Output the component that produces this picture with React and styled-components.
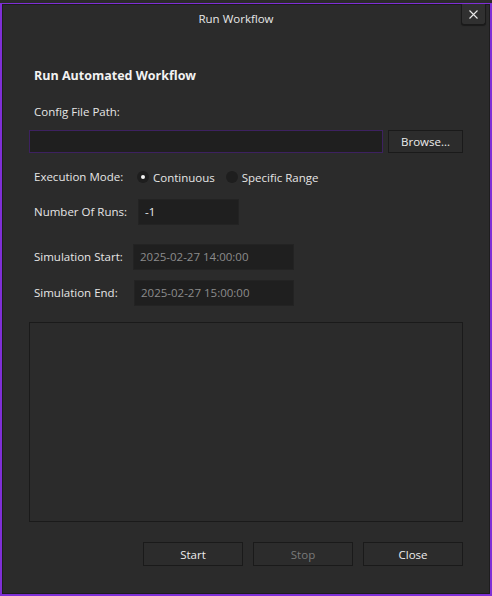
import React from 'react';
import styled, { createGlobalStyle } from 'styled-components';

/*
	:::: Styles ::::
*/
const Global = createGlobalStyle`
	html, body {
		margin: 0;
		padding: 0;
		background-color: #2b2b2b;
	}
	body {
		font-family: "Open Sans", "Noto Sans", sans-serif;
		font-size: 11.5px;
		color: #e6e6e6;
	}
	* {
		box-sizing: border-box;
	}
`;

const Window = styled.div`
	display: flex;
	flex-direction: column;
	margin-top: 3px;
	width: 492px;
	height: 593px;
	background-color: #2b2b2b;
	border: 1px solid #7f2fd6;
	border-left-width: 2px;
	border-right-width: 2px;
	border-bottom-width: 2px;
	box-shadow: inset 0 0 0 1px #1d1d1d;
`;

const TitleBar = styled.div`
	display: flex;
	height: 30px;
	padding-right: 4px;
`;

const Title = styled.div`
	flex: 1;
	padding-left: 9px;
	line-height: 30px;
	text-align: center;
	color: #e8e8e8;
`;

const CloseBtn = styled.div`
	display: flex;
	align-items: center;
	justify-content: center;
	width: 25px;
	height: 21px;
	background-color: #303030;
	border: 1px solid #1a1a1a;
	border-top: none;
	border-radius: 0 0 3px 3px;
	box-shadow: 0 1px 1px rgba(0, 0, 0, 0.4);
`;

const Body = styled.div`
	display: flex;
	flex-direction: column;
	flex: 1;
	padding: 0 27px 0 27px;
`;

const Heading = styled.div`
	margin-top: 34px;
	padding-left: 5px;
	line-height: 16px;
	font-size: 12.5px;
	font-weight: 700;
	color: #f2f2f2;
`;

const FieldLabel = styled.div`
	margin-top: 20px;
	padding-left: 5px;
	line-height: 16px;
`;

const Row = styled.div`
	display: flex;
	align-items: center;
	gap: ${p => p.$gap || 0}px;
	margin-top: ${p => p.$top || 0}px;
	height: ${p => p.$height || 16}px;
`;

const RowLabel = styled.div`
	flex: none;
	width: ${p => p.$width}px;
	padding-left: 5px;
	line-height: 16px;
	white-space: nowrap;
`;

const TextBox = styled.div`
	display: flex;
	align-items: center;
	flex: ${p => (p.$grow ? 1 : 'none')};
	width: ${p => (p.$width ? p.$width + 'px' : 'auto')};
	height: 100%;
	padding: 0 6px 2px;
	background-color: #1f1f1f;
	border: 1px solid ${p => (p.$focus ? '#3d2160' : '#232323')};
	color: ${p => (p.$dim ? '#8c8c8c' : '#ececec')};
	white-space: nowrap;
`;

const Button = styled.div`
	display: flex;
	align-items: center;
	justify-content: center;
	flex: none;
	width: ${p => p.$width || 100}px;
	height: ${p => p.$height || 24}px;
	background-color: #2c2c2c;
	border: 1px solid #1a1a1a;
	color: ${p => (p.$disabled ? '#7a7a7a' : '#ececec')};
`;

const Radio = styled.div`
	display: flex;
	align-items: center;
	gap: 4px;
	margin-right: 11px;
	white-space: nowrap;
`;

const RadioDot = styled.span`
	display: flex;
	align-items: center;
	justify-content: center;
	width: 12px;
	height: 12px;
	border-radius: 50%;
	background-color: #1e1e1e;

	&::after {
		content: '';
		display: ${p => (p.$checked ? 'block' : 'none')};
		width: 4px;
		height: 4px;
		border-radius: 50%;
		background-color: #f4f4f4;
	}
`;

const LogBox = styled.div`
	margin-top: 16px;
	height: 200px;
	border: 1px solid #1a1a1a;
	background-color: #2b2b2b;
`;

const Footer = styled.div`
	display: flex;
	justify-content: flex-end;
	gap: 10px;
	margin-top: 20px;
`;

const App = () => {
	return (
		<>
			<Global />
			<Window>
				<TitleBar>
					<Title>Run Workflow</Title>
					<CloseBtn>
						<svg width="9" height="9" viewBox="0 0 9 9">
							<path d="M0.5 0.5 L8.5 8.5 M8.5 0.5 L0.5 8.5" stroke="#e8e8e8" strokeWidth="1.1" />
						</svg>
					</CloseBtn>
				</TitleBar>
				<Body>
					<Heading>Run Automated Workflow</Heading>
					<FieldLabel>Config File Path:</FieldLabel>
					<Row $top={10} $height={23} $gap={5}>
						<TextBox $grow $focus />
						<Button $width={75} $height={23}>Browse...</Button>
					</Row>
					<Row $top={16}>
						<RowLabel $width={108}>Execution Mode:</RowLabel>
						<Radio><RadioDot $checked />Continuous</Radio>
						<Radio><RadioDot />Specific Range</Radio>
					</Row>
					<Row $top={14} $height={26}>
						<RowLabel $width={109}>Number Of Runs:</RowLabel>
						<TextBox $width={101}>-1</TextBox>
					</Row>
					<Row $top={19} $height={26}>
						<RowLabel $width={104}>Simulation Start:</RowLabel>
						<TextBox $width={161} $dim>2025-02-27 14:00:00</TextBox>
					</Row>
					<Row $top={10} $height={26}>
						<RowLabel $width={105}>Simulation End:</RowLabel>
						<TextBox $width={160} $dim>2025-02-27 15:00:00</TextBox>
					</Row>
					<LogBox />
					<Footer>
						<Button>Start</Button>
						<Button $disabled>Stop</Button>
						<Button>Close</Button>
					</Footer>
				</Body>
			</Window>
		</>
	);
};

export default App;
